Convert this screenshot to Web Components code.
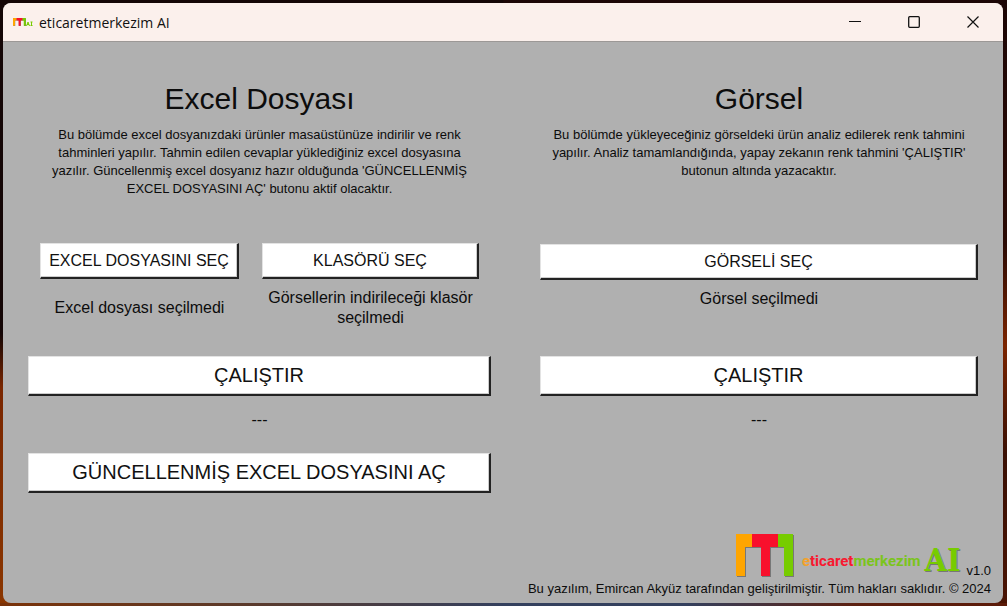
<!DOCTYPE html>
<html lang="tr">
<head>
<meta charset="utf-8">
<title>eticaretmerkezim AI</title>
<style>
html, body { margin: 0; height: 100%; }
body {
  background:
    linear-gradient(90deg, #7a3208, #5a3a2c 25%, #34405e 50%, #34405e 68%, #5c2010 85%, #5c1a08) bottom / 100% 3px no-repeat,
    linear-gradient(#140606 0%, #140606 55%, #7a2600 64%, #8a3600 100%) left / 50% 100% no-repeat,
    linear-gradient(#1c0606 0%, #2a0a04 40%, #7a2400 57%, #3a1004 75%, #4a1404 100%);
  font-family: "Liberation Sans", Arial, sans-serif;
  color: #0c0c0c;
}
</style>
</head>
<body>
<app-window></app-window>
<script>
const define = (name, html) => customElements.define(name, class extends HTMLElement {
  constructor() {
    super();
    const t = document.createElement('template');
    t.innerHTML = html;
    this.attachShadow({ mode: 'open' }).append(t.content.cloneNode(true));
  }
});

define('brand-mark', `
<style>:host{display:block} svg{display:block;width:100%;height:100%}</style>
<svg viewBox="0 0 58 43" preserveAspectRatio="none" aria-hidden="true">
  <path d="M1 1H17V14H10V43H1Z" fill="#777"/><path d="M42 1H58V43H49V14H42Z" fill="#777"/>
  <path d="M17 1H43V14H35V43H26V14H17Z" fill="#777"/>
  <path d="M0 0H16V13H9V42H0Z" fill="#ffa500"/>
  <path d="M41 0H57V42H48V13H41Z" fill="#7c0"/>
  <path d="M16 0H42V13H34V42H25V13H16Z" fill="#f8102c"/>
</svg>`);

define('title-bar', `
<style>
:host{display:flex;align-items:center;height:39px;box-sizing:border-box;background:#fbf0ec;border-bottom:1px solid #9c9896;padding:0 1px 0 10px;font:14px "Open Sans","Noto Sans",sans-serif;color:#111}
.icon{display:flex;align-items:flex-end;width:20px;margin-right:6px}
brand-mark{width:13px;height:8px}
.name{flex:1}
button{width:59px;height:38px;border:0;padding:0;background:none;display:grid;place-items:center;color:#111}
svg{display:block}
</style>
<span class="icon"><brand-mark></brand-mark><svg width="7" height="5" viewBox="0 0 7 5" fill="none" stroke="#7c0" aria-hidden="true"><path d="M.5 5 2 1 3.500 5M1 3.500H3M4.500 1H6.500M5.500 1V5M4.500 4.500H6.500"/></svg></span>
<span class="name"><slot></slot></span>
<button aria-label="Simge durumuna küçült"><svg width="12" height="12" fill="none" stroke="currentColor"><path d="M0 5.500H12"/></svg></button>
<button aria-label="Ekranı kapla"><svg width="12" height="12" fill="none" stroke="currentColor" stroke-width="1.300"><rect x=".7" y=".7" width="10.600" height="10.600" rx="1"/></svg></button>
<button aria-label="Kapat"><svg width="12" height="12" fill="none" stroke="currentColor" stroke-width="1.200"><path d="M.5.5 11.500 11.500M11.500.5.5 11.500"/></svg></button>`);

define('raised-button', `
<style>
:host{display:block}
button{display:block;width:100%;height:36px;box-sizing:border-box;padding:0;border:1px solid;border-color:#e3e3e3 #222 #222 #e3e3e3;border-right-width:2px;border-bottom-width:2px;background:#fff;box-shadow:inset -1px -1px #ccc;color:#111;font:16px "Liberation Sans",Arial,sans-serif;white-space:nowrap}
:host([size=large]) button{height:40px;font-size:20px}
</style>
<button><slot></slot></button>`);

define('task-panel', `
<style>
:host{display:block;text-align:center}
h1{margin:0;font-weight:400;font-size:30px;line-height:34px}
.intro{margin:10px auto 0;max-width:430px;min-height:117px;font-size:13px;line-height:18px}
.pick{min-height:113px;box-sizing:border-box}
.status{margin:16px 0 0;font-size:16px;line-height:16px}
</style>
<h1><slot name="title"></slot></h1>
<div class="intro"><slot name="intro"></slot></div>
<div class="pick"><slot name="pick"></slot></div>
<slot name="run"></slot>
<div class="status"><slot name="status"></slot></div>
<slot name="result"></slot>`);

define('file-picker', `
<style>
:host{display:block;min-width:0}
p{margin:9px 0 0;font-size:16px;line-height:20px}
:host([spaced]) p{margin-top:19px}
</style>
<raised-button><slot></slot></raised-button><p><slot name="state"></slot></p>`);

define('app-footer', `
<style>
:host{display:block;padding:0 12px 5px;font-size:13px;line-height:18px;text-align:right}
.brand{display:flex;justify-content:flex-end;align-items:flex-end}
brand-mark{width:58px;height:43px;margin-bottom:3px}
.word{margin:0 0 10px 8px;font:bold 15px/18px Roboto,sans-serif;color:#7bc41c}
.e{color:#f3a12a}.t{color:#f8182f}
.ai{margin-left:4px;font:bold 32px/40px "DejaVu Serif Condensed","DejaVu Serif",serif;color:#7c0;text-shadow:1px 1px #777}
.v{margin-left:6px}
</style>
<div class="brand"><brand-mark></brand-mark><span class="word"><span class="e">e</span><span class="t">ticaret</span>merkezim</span><span class="ai">AI</span><span class="v">v1.0</span></div>
<div>Bu yazılım, Emircan Akyüz tarafından geliştirilmiştir. Tüm hakları saklıdır. © 2024</div>`);

define('app-window', `
<style>
:host{display:flex;box-sizing:border-box;min-height:100vh;padding:3px 4px 3px 3px}
.frame{flex:1;min-width:0;display:flex;flex-direction:column;border-radius:8px;overflow:hidden;background:#b0b0b0}
main{flex:1;display:grid;grid-template-columns:463fr 438fr;column-gap:49px;padding:40px 25px 0}
.pair{display:grid;grid-template-columns:199fr 217fr;gap:23px;padding:0 12px}
.single{padding-top:1px}
.result{margin-top:25px}
</style>
<div class="frame">
<title-bar>eticaretmerkezim AI</title-bar>
<main>
<task-panel>
<span slot="title">Excel Dosyası</span>
<span slot="intro">Bu bölümde excel dosyanızdaki ürünler masaüstünüze indirilir ve renk tahminleri yapılır. Tahmin edilen cevaplar yüklediğiniz excel dosyasına yazılır. Güncellenmiş excel dosyanız hazır olduğunda 'GÜNCELLENMİŞ EXCEL DOSYASINI AÇ' butonu aktif olacaktır.</span>
<div slot="pick" class="pair">
<file-picker spaced>EXCEL DOSYASINI SEÇ<span slot="state">Excel dosyası seçilmedi</span></file-picker>
<file-picker>KLASÖRÜ SEÇ<span slot="state">Görsellerin indirileceği klasör seçilmedi</span></file-picker>
</div>
<raised-button slot="run" size="large">ÇALIŞTIR</raised-button>
<span slot="status">---</span>
<raised-button slot="result" class="result" size="large">GÜNCELLENMİŞ EXCEL DOSYASINI AÇ</raised-button>
</task-panel>
<task-panel>
<span slot="title">Görsel</span>
<span slot="intro">Bu bölümde yükleyeceğiniz görseldeki ürün analiz edilerek renk tahmini yapılır. Analiz tamamlandığında, yapay zekanın renk tahmini 'ÇALIŞTIR' butonun altında yazacaktır.</span>
<file-picker slot="pick" class="single">GÖRSELİ SEÇ<span slot="state">Görsel seçilmedi</span></file-picker>
<raised-button slot="run" size="large">ÇALIŞTIR</raised-button>
<span slot="status">---</span>
</task-panel>
</main>
<app-footer></app-footer>
</div>`);
</script>
</body>
</html>
